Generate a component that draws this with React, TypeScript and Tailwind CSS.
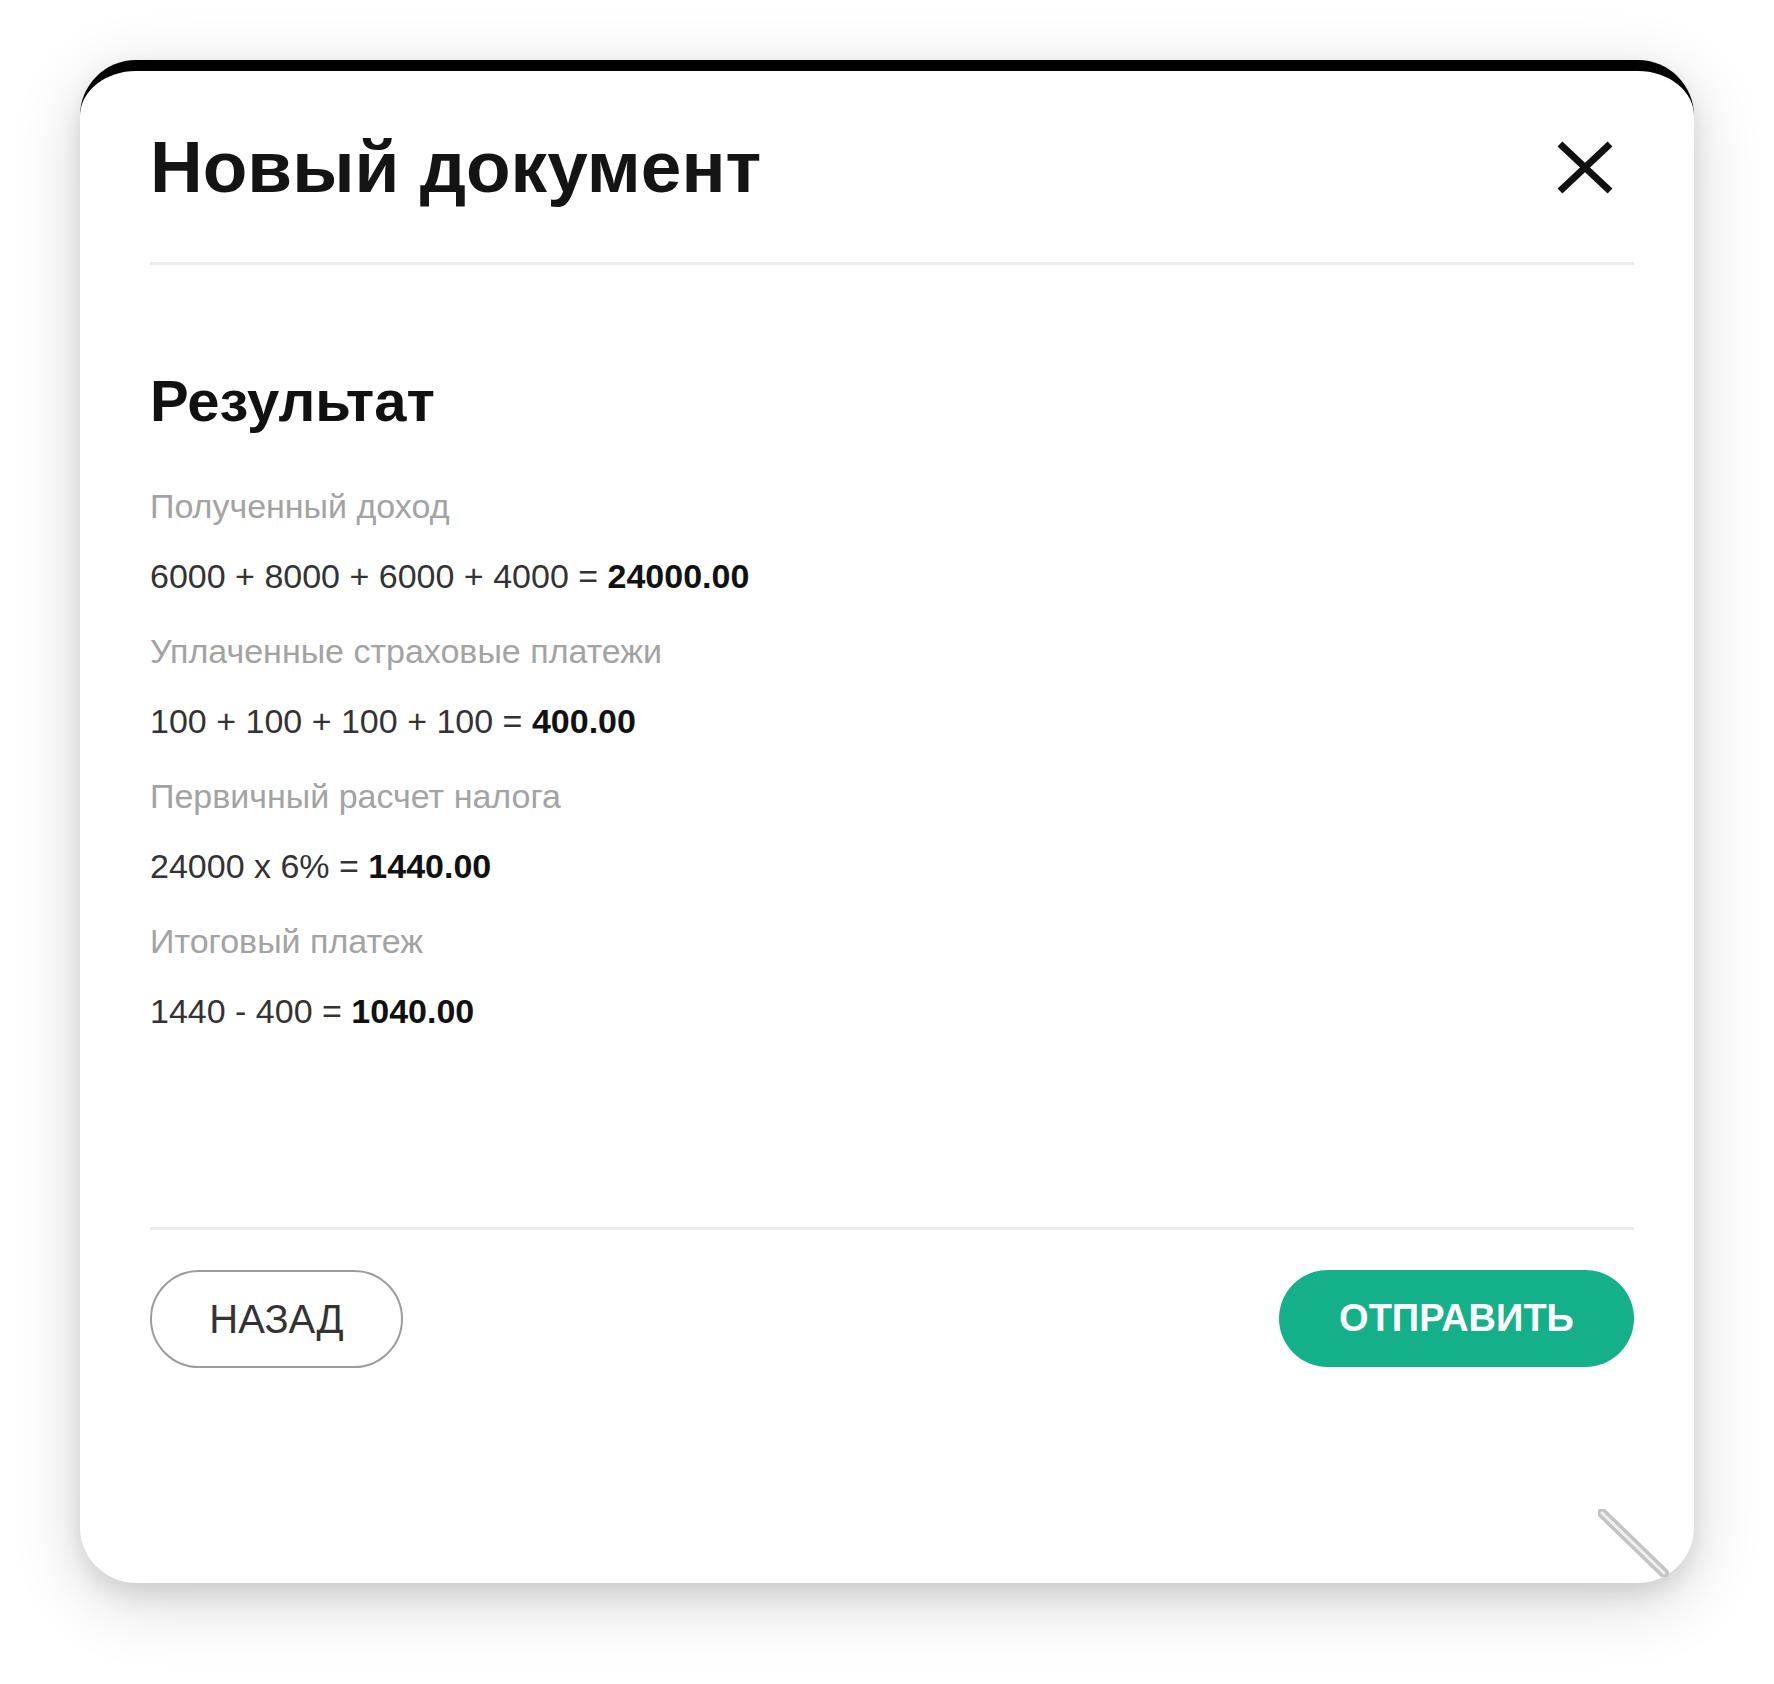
const rows = [
  { label: "Полученный доход", expr: "6000 + 8000 + 6000 + 4000 = ", total: "24000.00" },
  { label: "Уплаченные страховые платежи", expr: "100 + 100 + 100 + 100 = ", total: "400.00" },
  { label: "Первичный расчет налога", expr: "24000 x 6% = ", total: "1440.00" },
  { label: "Итоговый платеж", expr: "1440 - 400 = ", total: "1040.00" },
];

function CloseIcon() {
  return (
    <svg width="56" height="53" viewBox="0 0 56 53" className="block">
      <line x1="3" y1="3" x2="53" y2="50" stroke="#111" strokeWidth="7" />
      <line x1="53" y1="3" x2="3" y2="50" stroke="#111" strokeWidth="7" />
    </svg>
  );
}

// textarea-like resize grip in the bottom right corner
function ResizeGrip() {
  return (
    <svg width="72" height="68" viewBox="0 0 72 68" className="absolute right-[24px] bottom-[6px] blur-[0.6px]">
      <line x1="4" y1="4" x2="66" y2="64" stroke="#c4c4c4" strokeWidth="10" strokeLinecap="round" />
      <line x1="4" y1="4" x2="66" y2="64" stroke="#f0f0f0" strokeWidth="3" strokeLinecap="round" />
    </svg>
  );
}

export default function App() {
  return (
    <div
      className="min-h-[1684px] w-full bg-white pt-[60px] px-[80px]"
      style={{ fontFamily: '"Liberation Sans", Arial, sans-serif' }}
    >
      <div className="relative flex h-[1523px] flex-col rounded-[56px] border-t-[11px] border-black bg-white shadow-[0_10px_24px_rgba(0,0,0,0.10),0_18px_70px_rgba(0,0,0,0.16)]">
        <div className="flex flex-1 flex-col pl-[70px] pr-[60px]">
          {/* Header */}
          <div className="flex items-center justify-between border-b-[3px] border-[#ececec] pt-[59px] pb-[58px]">
            <h1 className="text-[73px] font-bold leading-[74px] text-[#141414]">Новый документ</h1>
            <button className="mr-[21px]">
              <CloseIcon />
            </button>
          </div>

          {/* Body */}
          <div className="flex-1 pt-[107px]">
            <h2 className="text-[58px] font-bold leading-[58px] text-[#111]">Результат</h2>
            <div className="mt-[51px] flex flex-col gap-[25px]">
              {rows.map(row => (
                <div key={row.label}>
                  <div className="mb-[20px] text-[34px] leading-[50px] text-[#a3a3a3]">{row.label}</div>
                  <div className="text-[34px] leading-[50px] text-[#333]">
                    {row.expr}
                    <span className="font-bold text-[#111]">{row.total}</span>
                  </div>
                </div>
              ))}
            </div>
          </div>

          {/* Footer */}
          <div className="flex items-start justify-between border-t-[3px] border-[#ececec] pt-[40px] pb-[215px]">
            <button className="flex h-[98px] w-[253px] items-center justify-center rounded-full border-2 border-[#9c9c9c] text-[40px] text-[#333]">
              НАЗАД
            </button>
            <button className="flex h-[97px] w-[355px] items-center justify-center rounded-full bg-[#14b08a] text-[38px] font-bold text-white">
              ОТПРАВИТЬ
            </button>
          </div>
        </div>
        <ResizeGrip />
      </div>
    </div>
  );
}
